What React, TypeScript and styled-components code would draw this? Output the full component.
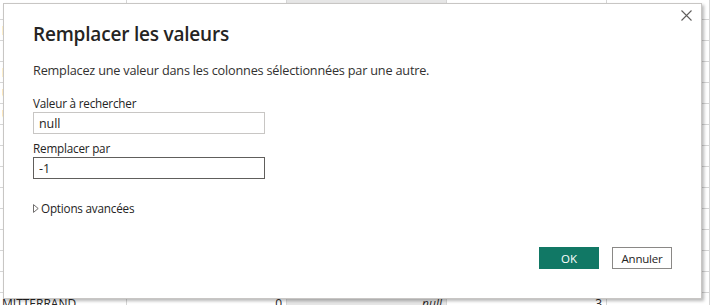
import styled, { createGlobalStyle } from "styled-components";

const GlobalStyle = createGlobalStyle`
  html, body {
    margin: 0;
    padding: 0;
    background: #ffffff;
    overflow: hidden;
  }
  body {
    font-family: "Segoe UI", "Open Sans", "Noto Sans", sans-serif;
    color: #252423;
  }
`;

interface IRow {
  name: string;
  count: string;
  value: string;
  rank: string;
}

const empty: IRow = { name: "", count: "", value: "", rank: "" };

// only the slivers of the sheet that show around the dialog
const rows: IRow[] = [
  empty,
  { ...empty, name: "F" },
  empty,
  { ...empty, name: "F" },
  { ...empty, name: "U" },
  { ...empty, name: "U" },
  empty,
  empty,
  empty,
  empty,
  empty,
  empty,
  empty,
  empty,
  { name: "MITTERRAND", count: "0", value: "null", rank: "3" },
];

export default function App() {
  return (
    <Page>
      <GlobalStyle />
      <Sheet>
        {rows.map((row, i) => (
          <SheetRow key={i}>
            <Cell>{row.name}</Cell>
            <Cell $right>{row.count}</Cell>
            <Cell $right $shaded $italic>
              {row.value}
            </Cell>
            <Cell $right>{row.rank}</Cell>
            <Cell />
          </SheetRow>
        ))}
      </Sheet>

      <Dialog>
        <CloseButton aria-label="Fermer">
          <svg width="11" height="11" viewBox="0 0 11 11">
            <path
              d="M0.5 0.5 L10.5 10.5 M10.5 0.5 L0.5 10.5"
              stroke="#605e5c"
              strokeWidth="1.1"
              fill="none"
            />
          </svg>
        </CloseButton>

        <Title>Remplacer les valeurs</Title>
        <Description>
          Remplacez une valeur dans les colonnes sélectionnées par une autre.
        </Description>

        <Form>
          <Field>
            <Label>Valeur à rechercher</Label>
            <TextBox defaultValue="null" />
          </Field>
          <Field>
            <Label>Remplacer par</Label>
            <TextBox defaultValue="-1" $active />
          </Field>
        </Form>

        <Advanced>
          <svg width="6" height="9" viewBox="0 0 6 9">
            <path
              d="M0.5 0.6 L5.2 4.5 L0.5 8.4 Z"
              stroke="#605e5c"
              strokeWidth="0.9"
              fill="none"
            />
          </svg>
          Options avancées
        </Advanced>

        <Footer>
          <PrimaryButton>OK</PrimaryButton>
          <SecondaryButton>Annuler</SecondaryButton>
        </Footer>
      </Dialog>
    </Page>
  );
}

const Page = styled.div`
  position: relative;
  width: 710px;
  height: 305px;
  overflow: hidden;
  background: #ffffff;
`;

const Sheet = styled.div`
  display: flex;
  flex-direction: column;
  margin-top: -1px;
`;

const SheetRow = styled.div`
  display: grid;
  grid-template-columns: 127px 160px 160px 160px 1fr;
  height: 21px;
  border-bottom: 1px solid #d6d6d6;
  box-sizing: border-box;
  font-size: 12px;
  color: #252423;
`;

const Cell = styled.div<{ $right?: boolean; $shaded?: boolean; $italic?: boolean }>`
  display: flex;
  align-items: center;
  justify-content: ${(p) => (p.$right ? "flex-end" : "flex-start")};
  padding: 0 4px 0 2px;
  border-right: 1px solid #d6d6d6;
  background: ${(p) => (p.$shaded ? "#e6e6e6" : "transparent")};
  font-style: ${(p) => (p.$italic ? "italic" : "normal")};
  white-space: nowrap;
  overflow: hidden;
`;

const Dialog = styled.div`
  position: absolute;
  left: 3px;
  top: 3px;
  width: 699px;
  height: 296px;
  box-sizing: border-box;
  background: #ffffff;
  border: 1px solid #c8c6c4;
  box-shadow: 2px 2px 3px rgba(0, 0, 0, 0.28);
  padding: 17px 29px 0 29px;
  display: flex;
  flex-direction: column;
`;

const CloseButton = styled.button`
  position: absolute;
  top: 1px;
  right: 5px;
  width: 20px;
  height: 20px;
  padding: 0;
  border: none;
  background: transparent;
  display: flex;
  align-items: center;
  justify-content: center;
`;

const Title = styled.h1`
  margin: 0;
  font-size: 19px;
  line-height: 26px;
  font-weight: 600;
  color: #252423;
  letter-spacing: -0.2px;
`;

const Description = styled.p`
  margin: 15px 0 0 0;
  font-size: 12.7px;
  line-height: 17px;
  letter-spacing: -0.2px;
  color: #323130;
`;

const Form = styled.div`
  display: flex;
  flex-direction: column;
  gap: 6px;
  margin-top: 16px;
`;

const Field = styled.div`
  display: flex;
  flex-direction: column;
  gap: 1px;
`;

const Label = styled.label`
  font-size: 11.7px;
  line-height: 16px;
  letter-spacing: -0.2px;
  color: #252423;
`;

const TextBox = styled.input<{ $active?: boolean }>`
  width: 232px;
  height: 22px;
  box-sizing: border-box;
  border: 1px solid ${(p) => (p.$active ? "#605e5c" : "#c8c6c4")};
  padding: 0 5px;
  font-family: inherit;
  font-size: 12.5px;
  letter-spacing: -0.1px;
  color: #252423;
  outline: none;
`;

const Advanced = styled.div`
  display: flex;
  align-items: center;
  gap: 2px;
  margin-top: 21px;
  font-size: 11.7px;
  line-height: 16px;
  letter-spacing: -0.2px;
  color: #252423;
`;

const Footer = styled.div`
  display: flex;
  justify-content: flex-end;
  gap: 13px;
  margin-top: auto;
  margin-bottom: 29px;
`;

const PrimaryButton = styled.button`
  width: 60px;
  height: 22px;
  border: none;
  background: #117865;
  color: #ffffff;
  font-family: inherit;
  font-size: 11.5px;
  padding: 0;
`;

const SecondaryButton = styled.button`
  width: 60px;
  height: 22px;
  box-sizing: border-box;
  border: 1px solid #8a8886;
  background: #ffffff;
  color: #252423;
  font-family: inherit;
  font-size: 11.5px;
  letter-spacing: -0.2px;
  padding: 0;
`;
